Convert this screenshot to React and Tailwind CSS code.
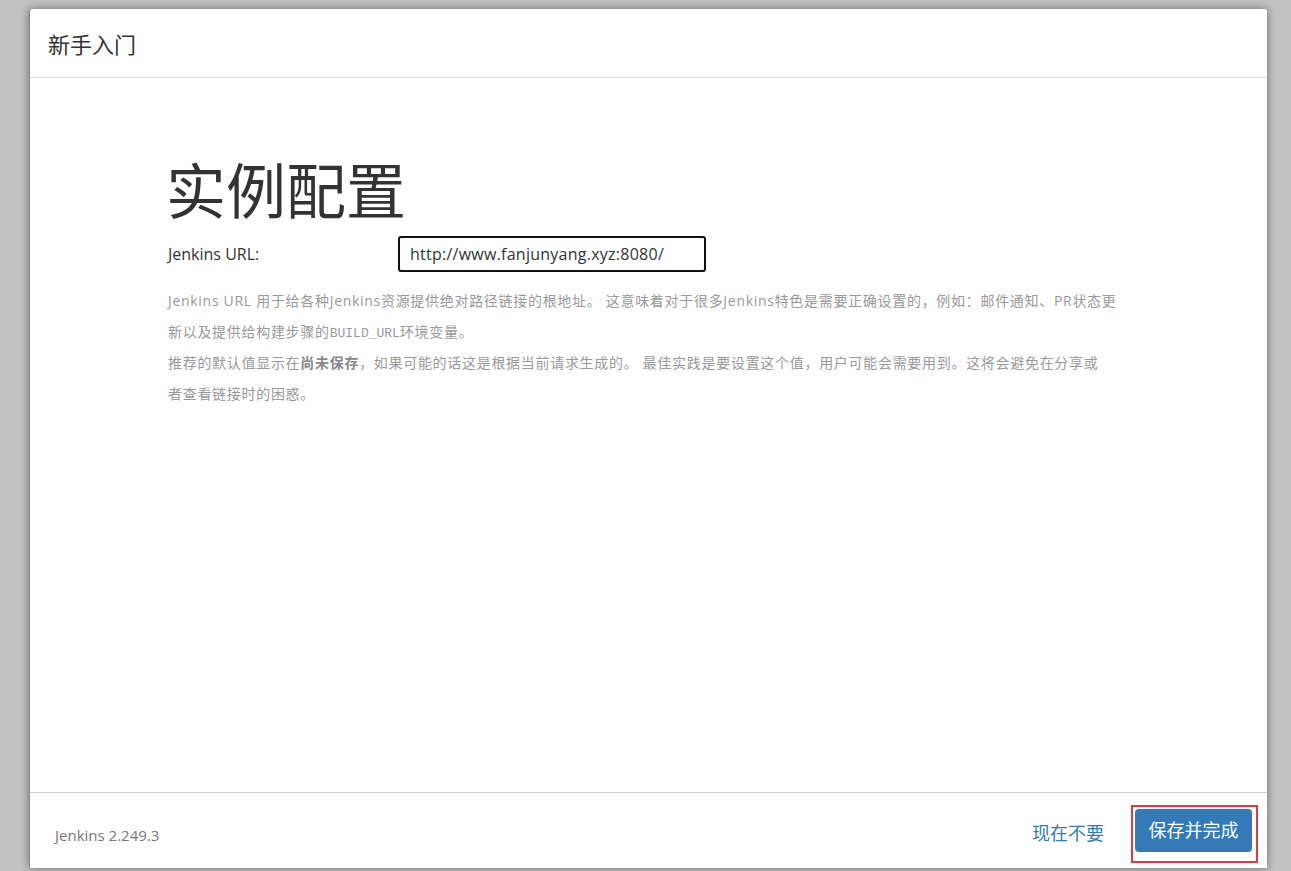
import React from "react";

const sans = "font-['Open_Sans','Noto_Sans_CJK_SC',sans-serif]";

export default function App() {
  return (
    <div className={`w-[1291px] h-[871px] overflow-hidden bg-[#c2c2c2] ${sans}`}>
      <div className="ml-[29px] mt-[9px] w-[1238px] h-[859px] bg-white rounded-t-[3px] shadow-[0_0_10px_rgba(0,0,0,0.45)] flex flex-col border-l border-[#8a8a8a]">
        <div className="h-[69px] border-b border-[#e3e3e3] flex items-center pl-[18px] shrink-0">
          <span className="text-[22px] text-[#333] leading-none mt-[2px]">新手入门</span>
        </div>
        <div className="flex-1 pl-[136px] pr-[150px] pt-[75px]">
          <h1 className="text-[60px] leading-[76px] text-[#333] font-normal">实例配置</h1>
          <div className="flex items-center mt-[7px] h-[36px]">
            <label className="w-[232px] pl-[2px] text-[16px] text-[#333]">Jenkins URL:</label>
            <div className="w-[308px] h-[36px] border-2 border-[#111] rounded-[3px] flex items-center pl-[10px] text-[16px] tracking-[0.25px] text-[#333]">
              http://www.fanjunyang.xyz:8080/
            </div>
          </div>
          <div className="mt-[13px] pl-[2px] w-[956px] text-[14px] tracking-[0.7px] leading-[31px] text-[#999]">
            <p className="h-[62px]">
              Jenkins URL 用于给各种Jenkins资源提供绝对路径链接的根地址。 这意味着对于很多Jenkins特色是需要正确设置的，例如：邮件通知、PR状态更新以及提供给构建步骤的<code className="font-['Liberation_Mono',monospace] text-[13px] leading-none tracking-normal">BUILD_URL</code>环境变量。
            </p>
            <p className="h-[62px]">
              推荐的默认值显示在<b className="font-bold text-[#888] leading-none">尚未保存</b>，如果可能的话这是根据当前请求生成的。 最佳实践是要设置这个值，用户可能会需要用到。这将会避免在分享或<br />者查看链接时的困惑。
            </p>
          </div>
        </div>
        <div className="h-[76px] border-t border-[#cfcfcf] flex items-center pl-[25px] pr-[9px] shrink-0">
          <span className="text-[15px] text-[#777] mt-[9px]">Jenkins 2.249.3</span>
          <div className="ml-auto flex items-center mt-[10px]">
            <span className="text-[18px] text-[#337ab7] mr-[27px] -mt-[4px]">现在不要</span>
            <div className="border-2 border-[#e0393e] px-[2px] pt-[2px] pb-[9px] w-[127px] h-[58px] -mt-[4px]">
              <div className="w-[117px] h-[43px] bg-[#337ab7] rounded-[4px] flex items-center justify-center text-white text-[18px]">
                保存并完成
              </div>
            </div>
          </div>
        </div>
      </div>
    </div>
  );
}
